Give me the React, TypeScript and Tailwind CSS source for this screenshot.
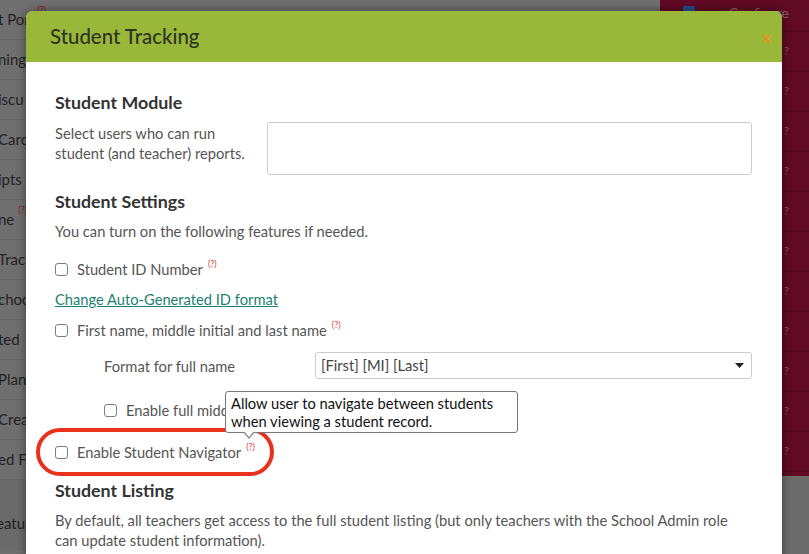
const Help = () => (
  <sup className="-ml-[4px] text-[9px] text-[#e23b3b] relative -top-[5px]">(?)</sup>
);

const Box = () => (
  <span className="inline-block w-[13px] h-[13px] border border-[#7d7d7d] rounded-[3px] bg-white shrink-0" />
);

const leftRows = ["t Port", "ning", "iscu", "Carc", "ipts", "ne", "Trac", "choo", "ted", "Plan", "Crea", "ed F"];

export default function App() {
  return (
    <div className="relative w-[809px] h-[554px] overflow-hidden bg-[#6f6f6f] font-['Lato',sans-serif]">
      {/* dimmed page behind the modal */}
      <div className="flex h-full">
        <div className="w-[120px] flex flex-col">
          {leftRows.map((t, i) => (
            <div key={i} className="h-[40px] shrink-0 flex items-center border-b border-[#666] text-[15px] text-[#222]">
              <span className="-ml-[2px]">{t}</span>
              {i === 0 && <sup className="ml-[2px] -mt-[10px] text-[9px] text-[#8b1a1a]">(?)</sup>}
              {i === 5 && <sup className="ml-[4px] -mt-[10px] text-[9px] text-[#8b1a1a]">(?)</sup>}
            </div>
          ))}
          <div className="h-[70px] flex items-end pb-[16px] bg-[#6a6a6a] text-[15px] text-[#222]">
            <span className="-ml-[4px]">eatur</span>
          </div>
        </div>
        <div className="flex-1" />
        <div className="w-[149px] flex flex-col">
          <div className="h-[476px] bg-[#600a25] flex flex-col">
            {Array.from({ length: 12 }).map((_, i) => (
              <div
                key={i}
                className={`${i === 0 ? "h-[32px] items-start pt-[2px]" : "h-[40px] items-center"} shrink-0 flex border-b border-[#55081f] pl-[23px] pr-[20px]`}
              >
                {i === 0 ? (
                  <>
                    <span className="mt-[4px] w-[12px] h-[12px] rounded-[2px] bg-[#1f4f8a]" />
                    <span className="ml-auto text-[14px] text-[#8a6470]">Configure</span>
                  </>
                ) : (
                  <span className="ml-auto text-[11px] text-[#7a4a58]">?</span>
                )}
              </div>
            ))}
          </div>
          <div className="flex-1 bg-[#6b6b6b]" />
        </div>
      </div>

      {/* modal */}
      <div className="absolute left-[26px] top-[11px] w-[756px] h-[560px] bg-white rounded-t-[7px] shadow-[0_0_10px_rgba(0,0,0,0.45)]">
        <div className="h-[51px] bg-[#99b83a] rounded-t-[7px] flex items-center pl-[24px] pr-[10px]">
          <h2 className="text-[20.4px] text-[#2e3322] font-medium">Student Tracking</h2>
          <span className="ml-auto mt-[2px] text-[18px] leading-none font-bold text-[#f0901c]">×</span>
        </div>

        <div className="pl-[29px] pr-[30px] pt-[28px] text-[14.7px] text-[#555]">
          <h3 className="text-[17.8px] leading-[24px] font-bold text-[#333]">Student Module</h3>
          <div className="mt-[8px] flex items-start">
            <p className="w-[212px] pt-px leading-[20px]">
              Select users who can run
              <br />
              student (and teacher) reports.
            </p>
            <div className="flex-1 h-[53px] border border-[#ccc] rounded-[3px]" />
          </div>

          <h3 className="mt-[14px] text-[17.8px] leading-[24px] font-bold text-[#333]">Student Settings</h3>
          <p className="mt-[8px] leading-[20px]">You can turn on the following features if needed.</p>

          <label className="mt-[18px] flex items-center gap-[9px] leading-[20px]">
            <Box />
            <span>Student ID Number</span>
            <Help />
          </label>

          <a className="mt-[10px] block leading-[20px] text-[#1d7f72] underline">Change Auto-Generated ID format</a>

          <label className="mt-[11px] flex items-center gap-[9px] leading-[20px]">
            <Box />
            <span>First name, middle initial and last name</span>
            <Help />
          </label>

          <div className="mt-[12px] ml-[49px] flex items-center">
            <span className="w-[211px] leading-[20px]">Format for full name</span>
            <div className="flex-1 h-[27px] border border-[#ccc] rounded-[3px] flex items-center pl-[5px] pr-[7px] text-[#444]">
              <span>[First] [MI] [Last]</span>
              <svg className="ml-auto" width="9" height="5" viewBox="0 0 9 5">
                <path d="M0 0h9L4.5 5z" fill="#222" />
              </svg>
            </div>
          </div>

          <label className="mt-[21px] ml-[49px] flex items-center gap-[9px] leading-[20px]">
            <Box />
            <span>Enable full middle name</span>
          </label>

          <label className="mt-[22px] flex items-center gap-[9px] leading-[20px]">
            <Box />
            <span>Enable Student Navigator</span>
            <Help />
          </label>

          <h3 className="mt-[16px] text-[17.8px] leading-[24px] font-bold text-[#333]">Student Listing</h3>
          <p className="mt-[8px] leading-[20px]">
            By default, all teachers get access to the full student listing (but only teachers with the School Admin role
            <br />
            can update student information).
          </p>
        </div>

        {/* highlight ring */}
        <div className="absolute left-[10px] top-[417px] w-[238px] h-[48px] rounded-[24px] border-[4px] border-[#e8321e]" />

        {/* tooltip */}
        <div className="absolute left-[199px] top-[380px] w-[293px] h-[42px] bg-white border border-[#777] rounded-[3px] px-[5px] pt-[2px] text-[14.7px] leading-[18px] text-[#111]">
          Allow user to navigate between students
          <br />
          when viewing a student record.
          <div className="absolute left-[17px] -bottom-[7px] w-0 h-0 border-l-[6px] border-r-[6px] border-t-[7px] border-l-transparent border-r-transparent border-t-[#888]" />
          <div className="absolute left-[18px] -bottom-[5px] w-0 h-0 border-l-[5px] border-r-[5px] border-t-[6px] border-l-transparent border-r-transparent border-t-white" />
        </div>
      </div>
    </div>
  );
}
